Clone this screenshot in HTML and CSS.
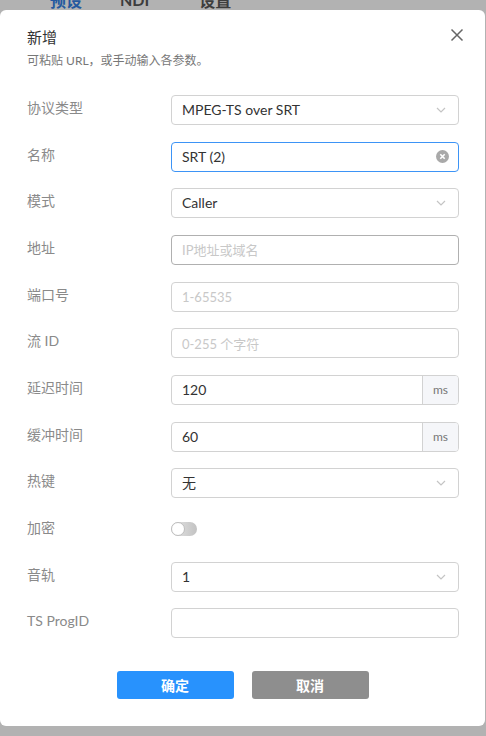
FILE: index.html
```html
<!DOCTYPE html>
<html lang="zh">
<head>
<meta charset="utf-8">
<link rel="stylesheet" href="styles.css">
</head>
<body>
<div class="tabs">
  <span class="tab active">预设</span>
  <span class="tab">NDI</span>
  <span class="tab">设置</span>
</div>
<div class="modal">
  <div class="head">
    <div class="titles">
      <div class="title">新增</div>
      <div class="sub">可粘贴 URL，或手动输入各参数。</div>
    </div>
    <svg class="close" width="14" height="14" viewBox="0 0 14 14"><path d="M1.5 1.5L12.5 12.5M12.5 1.5L1.5 12.5" stroke="#666" stroke-width="1.5" fill="none"/></svg>
  </div>
  <div class="form">
    <div class="row"><div class="label">协议类型</div>
      <div class="field select"><span class="val">MPEG-TS over SRT</span><svg class="chev" width="10" height="6" viewBox="0 0 10 6"><path d="M1 1L5 5L9 1" stroke="#c4c4c4" stroke-width="1.2" fill="none"/></svg></div></div>
    <div class="row"><div class="label">名称</div>
      <div class="field focus"><span class="val">SRT (2)</span><svg class="clear" width="13" height="13" viewBox="0 0 13 13"><circle cx="6.5" cy="6.5" r="6.5" fill="#a9a9a9"/><path d="M4.3 4.3L8.7 8.7M8.7 4.3L4.3 8.7" stroke="#fff" stroke-width="1.6"/></svg></div></div>
    <div class="row"><div class="label">模式</div>
      <div class="field select"><span class="val">Caller</span><svg class="chev" width="10" height="6" viewBox="0 0 10 6"><path d="M1 1L5 5L9 1" stroke="#c4c4c4" stroke-width="1.2" fill="none"/></svg></div></div>
    <div class="row"><div class="label">地址</div>
      <div class="field hover"><span class="ph">IP地址或域名</span></div></div>
    <div class="row"><div class="label">端口号</div>
      <div class="field"><span class="ph">1-65535</span></div></div>
    <div class="row"><div class="label">流 ID</div>
      <div class="field"><span class="ph">0-255 个字符</span></div></div>
    <div class="row"><div class="label">延迟时间</div>
      <div class="field addon"><span class="val">120</span><span class="unit">ms</span></div></div>
    <div class="row"><div class="label">缓冲时间</div>
      <div class="field addon"><span class="val">60</span><span class="unit">ms</span></div></div>
    <div class="row"><div class="label">热键</div>
      <div class="field select"><span class="val">无</span><svg class="chev" width="10" height="6" viewBox="0 0 10 6"><path d="M1 1L5 5L9 1" stroke="#c4c4c4" stroke-width="1.2" fill="none"/></svg></div></div>
    <div class="row"><div class="label">加密</div>
      <div class="toggle-wrap"><span class="toggle"><span class="knob"></span></span></div></div>
    <div class="row"><div class="label">音轨</div>
      <div class="field select"><span class="val">1</span><svg class="chev" width="10" height="6" viewBox="0 0 10 6"><path d="M1 1L5 5L9 1" stroke="#c4c4c4" stroke-width="1.2" fill="none"/></svg></div></div>
    <div class="row"><div class="label">TS ProgID</div>
      <div class="field"></div></div>
  </div>
  <div class="actions">
    <button class="btn ok">确定</button>
    <button class="btn cancel">取消</button>
  </div>
</div>
</body>
</html>
```
FILE: styles.css
```css
* { box-sizing: border-box; }
html, body { margin: 0; padding: 0; }
body {
  width: 486px;
  height: 736px;
  background: #b2b2b2;
  font-family: Lato, "Noto Sans CJK SC", sans-serif;
  overflow: hidden;
}
.tabs {
  height: 10px;
  overflow: hidden;
  display: flex;
  padding-left: 50px;
}
.tab {
  font-size: 16px;
  line-height: 20px;
  margin-top: -10px;
  color: #3d3d3d;
  font-weight: bold;
  font-family: "Noto Sans CJK SC", sans-serif;
}
.tab:nth-child(2) { margin-left: 38px; font-family: Lato, sans-serif; }
.tab:nth-child(3) { margin-left: 50px; }
.tab.active { color: #24599f; }
.modal {
  width: 485px;
  height: 716px;
  background: #fff;
  border-radius: 6px;
  padding: 17px 26px 0 27px;
  display: flex;
  flex-direction: column;
}
.head {
  display: flex;
  justify-content: space-between;
  align-items: flex-start;
}
.title {
  font-size: 15px;
  line-height: 20px;
  color: #333;
  font-family: "Noto Sans CJK SC", sans-serif;
}
.sub {
  margin-top: 5px;
  font-size: 12px;
  line-height: 18px;
  color: #777;
}
.close { margin-top: 1px; margin-right: -5px; }
.form {
  margin-top: 25px;
  display: flex;
  flex-direction: column;
  gap: 16.67px;
}
.row {
  display: flex;
  align-items: center;
  height: 30px;
}
.label {
  width: 144px;
  font-size: 14px;
  color: #8a8a8a;
  line-height: 20px;
  margin-top: -4px;
}
.field {
  flex: 1;
  height: 30px;
  border: 1px solid #d2d2d2;
  border-radius: 4px;
  display: flex;
  align-items: center;
  padding-left: 10px;
  font-size: 14px;
  color: #333;
  position: relative;
}
.field.focus { border-color: #3d94f6; }
.field.hover { border-color: #b0b0b0; }
.val { flex: 1; line-height: 20px; }
.ph { color: #c8c8c8; font-size: 13px; }
.chev { margin-right: 12px; }
.clear { margin-right: 9px; }
.field.addon { padding-right: 0; overflow: hidden; }
.unit {
  width: 36px;
  height: 100%;
  background: #f5f6f9;
  border-left: 1px solid #d2d2d2;
  display: flex;
  align-items: center;
  justify-content: center;
  font-size: 12px;
  color: #777;
}
.toggle-wrap { flex: 1; display: flex; align-items: center; }
.toggle {
  width: 26px;
  height: 14px;
  border-radius: 7px;
  background: linear-gradient(90deg, #e6e6e6, #c2c2c2);
  position: relative;
  margin-top: -2px;
}
.knob {
  position: absolute;
  left: 0;
  top: 0;
  width: 14px;
  height: 14px;
  border-radius: 50%;
  background: #fff;
  border: 1px solid #bdbdbd;
}
.actions {
  margin-top: 33px;
  display: flex;
  justify-content: center;
  gap: 18px;
  margin-left: -1px;
}
.btn {
  width: 117px;
  height: 28px;
  border: none;
  border-radius: 3px;
  color: #fff;
  font-size: 14px;
  font-weight: bold;
  font-family: "Noto Sans CJK SC", sans-serif;
  padding: 0;
}
.ok { background: #2892fd; }
.cancel { background: #8e8e8e; }
```
